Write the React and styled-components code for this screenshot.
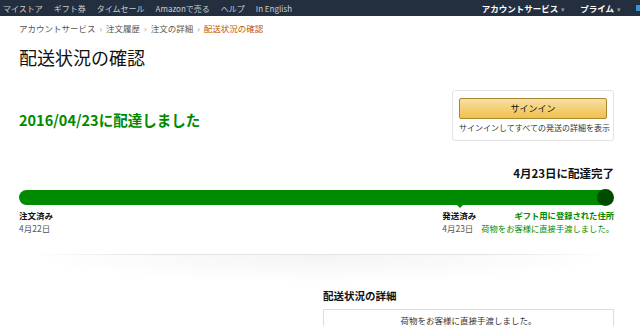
import React from 'react';
import styled, { createGlobalStyle } from 'styled-components';

const Global = createGlobalStyle`
  body {
    margin: 0;
    background: #fff;
    font-family: "Noto Sans CJK JP", "Liberation Sans", sans-serif;
    color: #111;
  }
`;

// ナビ
const Nav = styled.div`
  height: 16px;
  background: #232f3e;
  display: flex;
  align-items: center;
  justify-content: space-between;
  overflow: hidden;
  padding: 0 0 0 3px;
`;
const NavLinks = styled.div`
  display: flex;
  gap: 11px;
  font-size: 8px;
  line-height: 12px;
  color: #ccc;
  padding-top: 1px;
`;
const NavRight = styled.div`
  display: flex;
  height: 16px;
  align-items: center;
  gap: 15px;
`;
const NavItem = styled.div`
  color: #fff;
  font-size: 8.5px;
  font-weight: 700;
  line-height: 12px;
  white-space: nowrap;
`;
const Caret = styled.span`
  color: #999;
  font-size: 7px;
  font-weight: 400;
  margin-left: 3px;
`;
const CartStub = styled.div`
  width: 4px;
  height: 6px;
  background: #3b8fd6;
`;

const Page = styled.div`
  padding: 0 26px 0 19px;
`;
const Crumbs = styled.div`
  display: flex;
  gap: 4px;
  font-size: 8.5px;
  line-height: 14px;
  color: #555;
  margin-top: 5px;
`;
const Crumb = styled.span`
  color: ${p => (p.current ? '#c45500' : '#555')};
`;
const Sep = styled.span`
  color: #888;
`;
const Title = styled.h1`
  margin: 10px 0 0;
  font-size: 18px;
  font-weight: 400;
  line-height: 24px;
  color: #111;
`;

const StatusRow = styled.div`
  display: flex;
  justify-content: space-between;
  align-items: flex-start;
  margin-top: 21px;
`;
const Delivered = styled.div`
  margin-top: 21px;
  font-size: 14.5px;
  font-weight: 700;
  color: #008a00;
  line-height: 18px;
`;
const SignBox = styled.div`
  width: 162px;
  box-sizing: border-box;
  border: 1px solid #e3e3e3;
  border-radius: 3px;
  padding: 7px 6px 6px;
`;
const SignButton = styled.button`
  display: block;
  width: 100%;
  height: 21px;
  border: 1px solid #a88734;
  border-radius: 2px;
  background: linear-gradient(to bottom, #f7dfa5, #f0c14b);
  font-family: inherit;
  font-size: 9px;
  color: #111;
  padding: 0;
`;
const SignNote = styled.div`
  margin-top: 3px;
  font-size: 8px;
  line-height: 12px;
  color: #333;
  white-space: nowrap;
  text-align: center;
`;

const Tracker = styled.div`
  margin-top: 24px;
`;
const Done = styled.div`
  text-align: right;
  font-size: 11.5px;
  font-weight: 700;
  line-height: 16px;
`;
const BarWrap = styled.div`
  position: relative;
  margin-top: 9px;
  height: 16px;
`;
const Bar = styled.div`
  height: 15px;
  margin-right: 10px;
  background: #008a00;
  border-radius: 8px 0 0 8px;
`;
const EndDot = styled.div`
  position: absolute;
  right: 0;
  top: -1px;
  width: 17px;
  height: 17px;
  border-radius: 50%;
  background: #004b00;
`;
const Notch = styled.div`
  position: absolute;
  left: 438px;
  top: 15px;
  width: 0;
  height: 0;
  border-left: 3px solid transparent;
  border-right: 3px solid transparent;
  border-top: 3px solid #008a00;
`;
const Labels = styled.div`
  display: flex;
  justify-content: space-between;
  margin-top: 3px;
  font-size: 8.5px;
  line-height: 13px;
`;
const Step = styled.div`
  display: flex;
  flex-direction: column;
`;
const StepName = styled.span`
  font-weight: 700;
  color: #111;
`;
const StepDate = styled.span`
  color: #555;
`;
const EndGroup = styled.div`
  display: flex;
  gap: 5px;
`;
const GreenCol = styled.div`
  display: flex;
  flex-direction: column;
  align-items: flex-end;
  color: #008a00;
  font-size: 8.3px;
`;
const GreenHead = styled.span`
  font-weight: 700;
`;

const Divider = styled.div`
  margin: 19px 4px 0 11px;
  height: 28px;
  border-top: 1px solid;
  border-image: linear-gradient(to right, rgba(0,0,0,0), #e4e4e4 20%, #e4e4e4 80%, rgba(0,0,0,0)) 1;
  background: radial-gradient(ellipse 50% 100% at 50% 0, rgba(0,0,0,0.045), rgba(0,0,0,0) 100%);
`;

const Details = styled.div`
  display: grid;
  grid-template-columns: 1fr 291px;
  gap: 13px;
  margin-top: 6px;
`;
const DetailsHead = styled.div`
  font-size: 10.5px;
  font-weight: 700;
  line-height: 14px;
`;
const DetailsBox = styled.div`
  margin-top: 6px;
  border: 1px solid #ddd;
  border-bottom: none;
  height: 20px;
  font-size: 8.5px;
  line-height: 12px;
  text-align: center;
  padding-top: 4px;
  color: #333;
`;

const navLinks = ['マイストア', 'ギフト券', 'タイムセール', 'Amazonで売る', 'ヘルプ', 'In English'];

export default function App() {
  return (
    <div>
      <Global />
      <Nav>
        <NavLinks>
          {navLinks.map(t => <span key={t}>{t}</span>)}
        </NavLinks>
        <NavRight>
          <NavItem>アカウントサービス<Caret>▾</Caret></NavItem>
          <NavItem>プライム<Caret>▾</Caret></NavItem>
          <CartStub />
        </NavRight>
      </Nav>
      <Page>
        <Crumbs>
          <Crumb>アカウントサービス</Crumb><Sep>›</Sep>
          <Crumb>注文履歴</Crumb><Sep>›</Sep>
          <Crumb>注文の詳細</Crumb><Sep>›</Sep>
          <Crumb current>配送状況の確認</Crumb>
        </Crumbs>
        <Title>配送状況の確認</Title>
        <StatusRow>
          <Delivered>2016/04/23に配達しました</Delivered>
          <SignBox>
            <SignButton>サインイン</SignButton>
            <SignNote>サインインしてすべての発送の詳細を表示</SignNote>
          </SignBox>
        </StatusRow>
        <Tracker>
          <Done>4月23日に配達完了</Done>
          <BarWrap>
            <Bar />
            <Notch />
            <EndDot />
          </BarWrap>
          <Labels>
            <Step>
              <StepName>注文済み</StepName>
              <StepDate>4月22日</StepDate>
            </Step>
            <EndGroup>
              <Step>
                <StepName>発送済み</StepName>
                <StepDate>4月23日</StepDate>
              </Step>
              <GreenCol>
                <GreenHead>ギフト用に登録された住所</GreenHead>
                <span>荷物をお客様に直接手渡しました。</span>
              </GreenCol>
            </EndGroup>
          </Labels>
        </Tracker>
        <Divider />
        <Details>
          <div />
          <div>
            <DetailsHead>配送状況の詳細</DetailsHead>
            <DetailsBox>荷物をお客様に直接手渡しました。</DetailsBox>
          </div>
        </Details>
      </Page>
    </div>
  );
}
